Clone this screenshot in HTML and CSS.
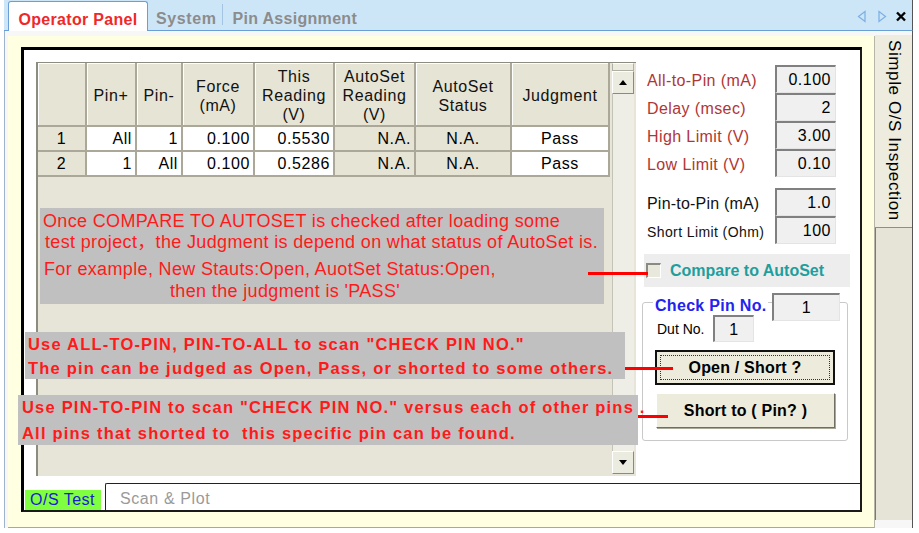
FILE: index.html
```html
<!DOCTYPE html>
<html lang="en">
  <head>
    <meta charset="UTF-8" />
    <meta name="viewport" content="width=device-width, initial-scale=1.0" />
    <title>Operator Panel</title>
    <link rel="stylesheet" href="styles.css">
  </head>

  <body>
    <div class="screen">
      <div class="window">
        <div class="tabbar">
          <div class="tab tab-active">Operator Panel</div>
          <div class="tab tab-system">System</div>
          <div class="tab-sep"></div>
          <div class="tab tab-pins">Pin Assignment</div>
          <svg class="tab-nav" width="52" height="31" viewBox="0 0 52 31">
            <polygon points="9,11.5 2.5,16.5 9,21.5" fill="none" stroke="#7fb2e2" stroke-width="1.3" />
            <polygon points="23,11.5 29.5,16.5 23,21.5" fill="none" stroke="#7fb2e2" stroke-width="1.3" />
            <path d="M41 12.5 L49 20.5 M49 12.5 L41 20.5" stroke="#000" stroke-width="2.4" />
          </svg>
        </div>

        <div class="content">
          <div class="frame">
            <div class="panel">
              <div class="main">
                <div class="grid">
                  <table class="pins">
                    <colgroup>
                      <col style="width: 49px" />
                      <col style="width: 50px" />
                      <col style="width: 46px" />
                      <col style="width: 72px" />
                      <col style="width: 80px" />
                      <col style="width: 81px" />
                      <col style="width: 96px" />
                      <col style="width: 98px" />
                    </colgroup>
                    <tr>
                      <th></th>
                      <th>Pin+</th>
                      <th>Pin-</th>
                      <th>Force<br />(mA)</th>
                      <th>This<br />Reading<br />(V)</th>
                      <th>AutoSet<br />Reading<br />(V)</th>
                      <th>AutoSet<br />Status</th>
                      <th>Judgment</th>
                    </tr>
                    <tr>
                      <td class="c">1</td>
                      <td class="w">All</td>
                      <td class="w">1</td>
                      <td class="w">0.100</td>
                      <td class="w">0.5530</td>
                      <td>N.A.</td>
                      <td class="c">N.A.</td>
                      <td class="w c">Pass</td>
                    </tr>
                    <tr>
                      <td class="c">2</td>
                      <td class="w">1</td>
                      <td class="w">All</td>
                      <td class="w">0.100</td>
                      <td class="w">0.5286</td>
                      <td>N.A.</td>
                      <td class="c">N.A.</td>
                      <td class="w c">Pass</td>
                    </tr>
                  </table>
                  <div class="vscroll">
                    <div class="vs-cap"></div>
                    <div class="vs-btn vs-up"></div>
                    <div class="vs-track"></div>
                    <div class="vs-btn vs-down"></div>
                  </div>
                </div>

                <div class="controls">
                  <div class="field">
                    <span class="field-label">All-to-Pin (mA)</span>
                    <span class="val">0.100</span>
                  </div>
                  <div class="field">
                    <span class="field-label">Delay (msec)</span>
                    <span class="val">2</span>
                  </div>
                  <div class="field">
                    <span class="field-label">High Limit (V)</span>
                    <span class="val">3.00</span>
                  </div>
                  <div class="field">
                    <span class="field-label">Low Limit (V)</span>
                    <span class="val">0.10</span>
                  </div>

                  <div class="field field-gap">
                    <span class="field-label plain">Pin-to-Pin (mA)</span>
                    <span class="val">1.0</span>
                  </div>
                  <div class="field">
                    <span class="field-label plain small">Short Limit (Ohm)</span>
                    <span class="val">100</span>
                  </div>

                  <div class="check-row">
                    <span class="checkbox"></span>
                    <span class="check-label">Compare to AutoSet</span>
                  </div>

                  <div class="group">
                    <div class="group-head">
                      <span class="group-title">Check Pin No.</span>
                      <span class="val val-pin">1</span>
                    </div>
                    <div class="dut">
                      <span class="dut-label">Dut No.</span>
                      <span class="val val-dut">1</span>
                    </div>
                    <div class="btn btn-focus"><span class="focus">Open / Short ?</span></div>
                    <div class="btn btn-raised">Short to ( Pin? )</div>
                  </div>
                </div>
              </div>

              <div class="subtabs">
                <div class="subtab-on"><span class="subtab-label">O/S Test</span></div>
                <div class="subtab-off">Scan &amp; Plot</div>
              </div>
            </div>
          </div>

          <div class="sidetabs">
            <div class="sidetab">Simple O/S Inspection</div>
            <div class="side-rest"></div>
          </div>
        </div>
      </div>

      <!-- annotations laid over the screenshot -->
      <div class="note note-compare">
        <div>Once COMPARE TO AUTOSET is checked after loading some</div>
        <div class="nc-2">test project，the Judgment is depend on what status of AutoSet is.</div>
        <div class="nc-3">For example, New Stauts:Open, AuotSet Status:Open,</div>
        <div class="nc-4">then the judgment is 'PASS'</div>
      </div>
      <div class="note note-scan">
        <div>Use ALL-TO-PIN, PIN-TO-ALL to scan "CHECK PIN NO."</div>
        <div>The pin can be judged as Open, Pass, or shorted to some others.</div>
      </div>
      <div class="note note-short">
        <div>Use PIN-TO-PIN to scan "CHECK PIN NO." versus each of other pins .</div>
        <div class="ns-2">All pins that shorted to&nbsp; this specific pin can be found.</div>
      </div>
      <div class="arrow arrow-compare"></div>
      <div class="arrow arrow-scan"></div>
      <div class="arrow arrow-short"></div>
    </div>
  </body>
</html>
```

FILE: styles.css
```css
* {
  box-sizing: border-box;
}
body {
  margin: 0;
  background: #fff;
  font-family: "Liberation Sans", Arial, "Noto Sans CJK SC", sans-serif;
  font-size: 16px;
  color: #000;
}
.screen {
  position: relative;
  width: 919px;
  height: 533px;
  overflow: hidden;
}
.window {
  margin-left: 4px;
  width: 909px;
}

/* top tabs */
.tabbar {
  height: 31px;
  display: flex;
  align-items: flex-end;
  padding-left: 4px;
  background: #cce6f8;
  border-bottom: 1px solid #6a9fd6;
  border-right: 1px solid #555;
}
.tab {
  height: 29px;
  display: flex;
  align-items: center;
  padding-top: 7px;
  font-weight: bold;
  letter-spacing: 0.3px;
  color: #8c8c8c;
}
.tab-active {
  width: 140px;
  height: 30px;
  justify-content: center;
  margin-bottom: -1px;
  background: #fff;
  color: #f02828;
  border: 1px solid #6a9fd6;
  border-bottom: none;
  border-radius: 3px 3px 0 0;
}
.tab-system {
  padding-left: 8px;
  padding-right: 5px;
  letter-spacing: 0.6px;
}
.tab-sep {
  width: 1px;
  height: 21px;
  margin-bottom: 5px;
  background: #a4c4e4;
}
.tab-pins {
  padding-left: 10px;
}
.tab-nav {
  margin-left: auto;
  margin-right: 4px;
  align-self: flex-start;
}

.content {
  display: flex;
  height: 497px;
  background: #f7f7f7;
  border-left: 1px solid #9fb4cc;
}
.frame {
  width: 867px;
  height: 492px;
  margin: 5px 0 0 3px;
  padding: 11px 12px 15px 13px;
  background: #ffffe1;
  border-right: 1px solid #b5b5a8;
  border-bottom: 1px solid #a8a8a0;
}
.panel {
  width: 841px;
  height: 465px;
  display: flex;
  flex-direction: column;
  background: #fff;
  border-top: 3px solid #000;
  border-left: 3px solid #000;
  border-right: 2px solid #1a1a1a;
  border-bottom: 2px solid #1a1a1a;
}
.main {
  display: flex;
  height: 433px;
  padding: 12px 0 0 12px;
}

/* grid */
.grid {
  flex: none;
  width: 600px;
  height: 414px;
  display: flex;
  align-items: flex-start;
  background: #e6e5d8;
  border-left: 2px solid #8c8c80;
  border-top: 1px solid #8c8c80;
}
.pins {
  width: 572px;
  table-layout: fixed;
  border-collapse: separate;
  border-spacing: 0;
  letter-spacing: 0.6px;
}
.pins th {
  height: 62px;
  padding-top: 4px;
  font-weight: normal;
  line-height: 19px;
  color: #111;
  background: #e5e4d5;
  border-right: 2px solid #aca899;
  border-bottom: 2px solid #aca899;
  box-shadow: inset 1px 1px 0 #fff;
}
.pins td {
  height: 25px;
  padding: 0 3px 0 0;
  text-align: right;
  background: #e5e4d5;
  border-right: 2px solid #aca899;
  border-bottom: 2px solid #aca899;
}
.pins td.w {
  background: #fff;
}
.pins td.c {
  text-align: center;
  padding: 0;
}

.vscroll {
  width: 22px;
  height: 411px;
  margin-left: 2px;
  display: flex;
  flex-direction: column;
}
.vs-cap {
  height: 8px;
  background: #ecebe0;
  border: 1px solid #b0afa3;
  border-top-color: #fff;
}
.vs-btn {
  height: 23px;
  display: flex;
  align-items: center;
  justify-content: center;
  background: #ecebe0;
  border: 1px solid;
  border-color: #fff #8a8a80 #8a8a80 #fff;
}
.vs-up::before {
  content: "";
  border-left: 4px solid transparent;
  border-right: 4px solid transparent;
  border-bottom: 5px solid #000;
}
.vs-down::before {
  content: "";
  border-left: 4px solid transparent;
  border-right: 4px solid transparent;
  border-top: 5px solid #000;
}
.vs-track {
  flex: 1;
  background: #efeee6;
  border-left: 1px solid #c4c3b8;
}

/* right side controls */
.controls {
  width: 207px;
  margin-left: 7px;
  padding-top: 3px;
}
.field {
  display: flex;
  align-items: center;
  height: 28px;
}
.field-gap {
  margin-top: 11px;
}
.field-label {
  flex: 1;
  padding: 3px 0 0 4px;
  color: #b03636;
  letter-spacing: 0.4px;
}
.field-label.plain {
  color: #111;
  letter-spacing: 0.2px;
}
.field-label.small {
  font-size: 14px;
  letter-spacing: 0.4px;
}
.val {
  width: 61px;
  height: 28px;
  margin-right: 14px;
  padding-right: 4px;
  text-align: right;
  line-height: 25px;
  letter-spacing: 0.5px;
  background: #f0f0f0;
  border-top: 2px solid #808080;
  border-left: 2px solid #808080;
  border-right: 1px solid #e4e4e4;
  border-bottom: 1px solid #e4e4e4;
}

.check-row {
  display: flex;
  align-items: center;
  height: 33px;
  margin: 10px 0 0 1px;
  background: #ededed;
}
.checkbox {
  width: 15px;
  height: 15px;
  margin-left: 2px;
  background: #e9e8dc;
  border-top: 2px solid #8a8a80;
  border-left: 2px solid #8a8a80;
  border-right: 1px solid #fff;
  border-bottom: 1px solid #fff;
}
.check-label {
  margin-left: 9px;
  font-weight: bold;
  color: #1f9e9e;
}

.group {
  width: 206px;
  height: 139px;
  margin: 15px 0 0 -1px;
  padding-left: 12px;
  border: 1px solid #c9c9c9;
  border-radius: 3px;
}
.group-head {
  display: flex;
  align-items: flex-start;
  height: 28px;
  margin-top: -10px;
}
.group-title {
  margin: 3px 0 0 -2px;
  padding: 0 2px;
  height: 19px;
  line-height: 19px;
  background: #fff;
  font-size: 16px;
  font-weight: bold;
  letter-spacing: 0.3px;
  color: #2323f0;
}
.val-pin {
  width: 68px;
  margin-left: auto;
  margin-right: 7px;
  text-align: center;
  padding-right: 0;
}
.dut {
  display: flex;
  align-items: center;
  height: 27px;
  margin-top: -6px;
}
.dut-label {
  width: 58px;
  padding-left: 2px;
  font-size: 14px;
}
.val-dut {
  width: 41px;
  height: 27px;
  text-align: center;
  padding-right: 0;
}
.btn {
  width: 180px;
  height: 35px;
  margin-top: 8px;
  display: flex;
  align-items: center;
  justify-content: center;
  font-size: 16px;
  font-weight: bold;
  letter-spacing: 0.2px;
  background: #ecebdc;
}
.btn-focus {
  border: 2px solid #111;
}
.btn-focus .focus {
  flex: 1;
  align-self: stretch;
  margin: 3px;
  display: flex;
  align-items: center;
  justify-content: center;
  border: 1px dotted #333;
}
.btn-raised {
  width: 179px;
  margin-left: 1px;
  border: 1px solid;
  border-color: #fff #716f64 #716f64 #fff;
  box-shadow: 1px 1px 0 #a8a798;
}

/* bottom tabs */
.subtabs {
  display: flex;
  height: 27px;
}
.subtab-on {
  width: 81px;
  padding-left: 1px;
  display: flex;
  align-items: flex-end;
}
.subtab-label {
  width: 76px;
  height: 20px;
  padding-left: 5px;
  line-height: 20px;
  letter-spacing: 0.5px;
  color: #1a1ad0;
  background: #7fff40;
}
.subtab-off {
  flex: 1;
  padding: 3px 0 0 14px;
  line-height: 24px;
  letter-spacing: 0.6px;
  color: #9a9a9a;
  border-top: 1px solid #222;
  border-left: 1px solid #222;
  border-top-left-radius: 2px;
}

/* right vertical tabs */
.sidetabs {
  width: 38px;
  display: flex;
  flex-direction: column;
  padding-top: 4px;
  border-right: 1px solid #555;
}
.sidetab {
  height: 193px;
  padding-top: 5px;
  writing-mode: vertical-rl;
  white-space: nowrap;
  font-size: 17px;
  line-height: 36px;
  letter-spacing: 0.6px;
  background: #edecdf;
  border-bottom: 1px solid #8f8f84;
}
.side-rest {
  flex: 1;
  margin-bottom: 8px;
  background: #e5e4d7;
  border-left: 1px solid #7a7a70;
}

/* annotations */
.note {
  position: absolute;
  background: #c0c0c0;
  color: #ff1a1a;
  white-space: nowrap;
}
.note-compare {
  left: 40px;
  top: 208px;
  width: 564px;
  height: 96px;
  padding: 2px 0 0 3px;
  font-size: 18px;
  line-height: 22px;
  letter-spacing: 0.35px;
}
.nc-2 {
  margin: -1px 0 0 2px;
}
.nc-3 {
  margin: 5px 0 0 1px;
}
.nc-4 {
  margin-left: 127px;
}
.note-scan {
  left: 25px;
  top: 332px;
  width: 600px;
  height: 47px;
  padding-left: 3px;
  font-size: 16.5px;
  font-weight: bold;
  line-height: 24px;
  letter-spacing: 1.2px;
}
.note-short {
  left: 18px;
  top: 395px;
  width: 620px;
  height: 50px;
  padding-left: 4px;
  font-size: 16.5px;
  font-weight: bold;
  line-height: 24px;
  letter-spacing: 1.2px;
}
.ns-2 {
  margin-top: 2px;
}
.arrow {
  position: absolute;
  height: 3px;
  background: #f00;
}
.arrow-compare {
  left: 588px;
  top: 272px;
  width: 60px;
}
.arrow-scan {
  left: 625px;
  top: 367px;
  width: 48px;
}
.arrow-short {
  left: 638px;
  top: 415px;
  width: 30px;
}
```
